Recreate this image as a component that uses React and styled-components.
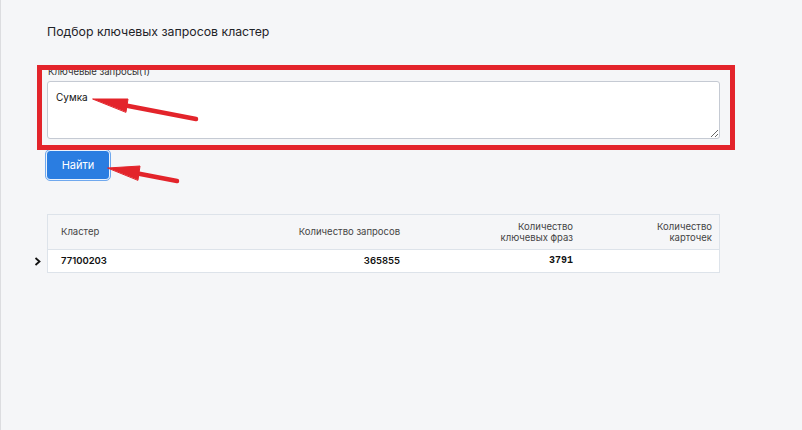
import styled, { createGlobalStyle } from "styled-components";

const GlobalStyle = createGlobalStyle`
  html, body {
    margin: 0;
    padding: 0;
    background: #f5f6f8;
  }
  body {
    font-family: Inter, "Noto Sans", sans-serif;
    color: #1f2328;
  }
`;

const rows = [{ id: "77100203", requests: "365855", phrases: "3791", cards: "" }];

function App() {
  return (
    <Page>
      <GlobalStyle />
      <Title>Подбор ключевых запросов кластер</Title>

      <Field>
        <Label>Ключевые запросы(1)</Label>
        <TextArea defaultValue="Сумка" />
        <Highlight />
      </Field>

      <SearchButton>Найти</SearchButton>

      <Table>
        <HeadRow>
          <Cell>Кластер</Cell>
          <Cell $right>Количество запросов</Cell>
          <Cell $right>
            Количество
            <br />
            ключевых фраз
          </Cell>
          <Cell $right $last>
            Количество
            <br />
            карточек
          </Cell>
        </HeadRow>
        {rows.map((r) => (
          <BodyRow key={r.id}>
            <Expander>
              <svg width="8" height="9" viewBox="0 0 8 9">
                <path d="M1.5 1 L5.5 4.5 L1.5 8" fill="none" stroke="#111" strokeWidth="1.8" />
              </svg>
            </Expander>
            <Cell $bold>{r.id}</Cell>
            <Cell $right $bold>{r.requests}</Cell>
            <Cell $right $mono>{r.phrases}</Cell>
            <Cell $right $last>{r.cards}</Cell>
          </BodyRow>
        ))}
      </Table>

      <Arrows width="802" height="430" viewBox="0 0 802 430">
        <g fill="#e3242b" stroke="#e3242b" strokeLinecap="round">
          <line x1="196" y1="119" x2="118" y2="104" strokeWidth="4.5" />
          <polygon points="93,99 128,99 126,112" strokeWidth="1" strokeLinejoin="round" />
          <line x1="177" y1="181" x2="130" y2="172" strokeWidth="4.5" />
          <polygon points="108,168 140,166 138,180" strokeWidth="1" strokeLinejoin="round" />
        </g>
      </Arrows>
    </Page>
  );
}

const Page = styled.div`
  position: relative;
  min-height: 430px;
  box-sizing: border-box;
  border-left: 1px solid #dcdde0;
  padding: 23px 0 0 46px;
`;

const Title = styled.h1`
  margin: 0;
  font-size: 12.3px;
  font-weight: 400;
  color: #1f2328;
  line-height: 18px;
`;

const Field = styled.div`
  position: relative;
  width: 673px;
  margin-top: 25px;
  display: flex;
  flex-direction: column;
`;

const Label = styled.label`
  font-size: 9.5px;
  color: #333;
  line-height: 12px;
  margin-left: 1px;
`;

const TextArea = styled.textarea`
  margin-top: 3px;
  width: 673px;
  height: 58px;
  box-sizing: border-box;
  border: 1px solid #c5cad3;
  border-radius: 3px;
  background: #fff;
  padding: 9px 8px;
  font-family: Inter, "Noto Sans", sans-serif;
  font-size: 10px;
  color: #111;
  outline: none;
`;

const Highlight = styled.div`
  position: absolute;
  left: -10px;
  top: -1px;
  width: 698px;
  height: 85px;
  box-sizing: border-box;
  border: 5px solid #e3242b;
  pointer-events: none;
`;

const SearchButton = styled.button`
  display: block;
  margin-top: 11px;
  margin-left: -1px;
  width: 64px;
  height: 30px;
  box-sizing: border-box;
  background: #2a7de1;
  color: #fff;
  font-family: Inter, "Noto Sans", sans-serif;
  font-size: 11px;
  font-weight: 400;
  border: 1px solid #eaf2fd;
  border-radius: 4px;
  outline: 1px solid #6fa8ee;
  cursor: pointer;
`;

const Table = styled.div`
  margin-top: 34px;
  width: 673px;
  box-sizing: border-box;
  border: 1px solid #dde3ea;
  font-size: 9.5px;
`;

const HeadRow = styled.div`
  display: grid;
  grid-template-columns: 150px 215px 173px 1fr;
  align-items: center;
  height: 34px;
  color: #444;
  background: #f5f6f8;
  border-bottom: 1px solid #dde3ea;
  line-height: 11.5px;
`;

const BodyRow = styled(HeadRow)`
  position: relative;
  height: 22px;
  background: #fff;
  border-bottom: none;
  color: #111;
`;

const Cell = styled.div`
  padding: 0 ${(p) => (p.$last ? "7px" : "13px")} 0 13px;
  text-align: ${(p) => (p.$right ? "right" : "left")};
  font-weight: ${(p) => (p.$mono ? 700 : p.$bold ? 600 : 400)};
  font-family: ${(p) => (p.$mono ? '"Liberation Mono", monospace' : "inherit")};
  font-size: ${(p) => (p.$mono ? "10px" : "inherit")};
`;

const Expander = styled.span`
  position: absolute;
  left: -14px;
  top: 7px;
  display: flex;
`;

const Arrows = styled.svg`
  position: absolute;
  left: -1px;
  top: 0;
  pointer-events: none;
`;

export default App;
